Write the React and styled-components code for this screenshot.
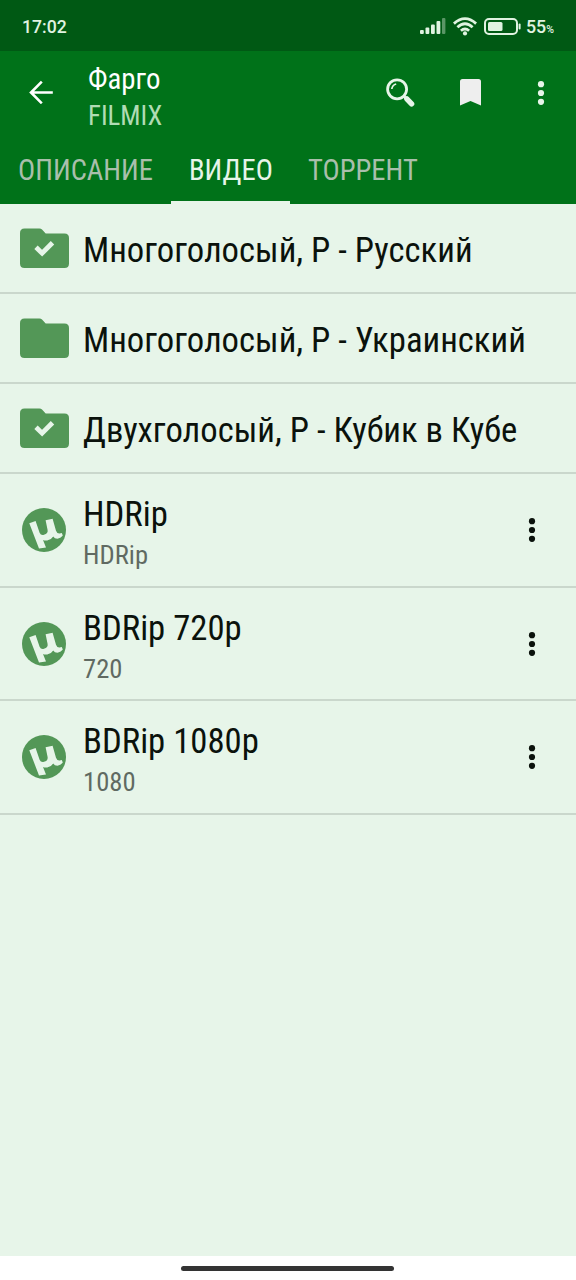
import React from "react";
import styled, { createGlobalStyle } from "styled-components";

const folders = [
  { title: "Многоголосый, P - Русский", checked: true },
  { title: "Многоголосый, P - Украинский", checked: false },
  { title: "Двухголосый, P - Кубик в Кубе", checked: true },
];

const torrents = [
  { title: "HDRip", quality: "HDRip", height: 114 },
  { title: "BDRip 720p", quality: "720", height: 113 },
  { title: "BDRip 1080p", quality: "1080", height: 114 },
];

function FolderIcon({ checked }) {
  return (
    <svg width="50" height="40" viewBox="0 0 50 40">
      <path
        d="M4.5 0.5H19.5Q21 0.5 22 1.5L25.7 5.5H44.5Q49 5.5 49 10V35.5Q49 40 44.5 40H4.5Q0 40 0 35.5V5Q0 0.5 4.5 0.5Z"
        fill="#539757"
      />
      {checked && (
        <path
          d="M16 19.3L22.1 25.2L32.5 14.7"
          fill="none"
          stroke="#e7f5e9"
          strokeWidth="4.8"
        />
      )}
    </svg>
  );
}

function TorrentIcon() {
  return (
    <svg width="44" height="44" viewBox="0 0 44 44">
      <circle cx="22" cy="22" r="22" fill="#539757" />
      <path
        d="M7.3 15.2L13.6 13L17.6 24.8Q18.8 27.6 22 26.8Q26.2 25.7 25.6 22L23.6 12.2L30.6 10.8L34 22.8Q35 25.8 37.6 25.6L39.8 25L40.8 27.4Q39 29.8 36.2 30.6Q32.8 31 31.2 28.4Q29.4 31.6 25.2 32.4Q22.6 32.8 21 32L24 39.6L17 40.4Z"
        fill="#e7f5e9"
      />
    </svg>
  );
}

function MoreIcon() {
  return (
    <svg width="8" height="24" viewBox="0 0 8 24" fill="currentColor">
      <circle cx="4" cy="3.2" r="3.1" />
      <circle cx="4" cy="12" r="3.1" />
      <circle cx="4" cy="20.8" r="3.1" />
    </svg>
  );
}

function BackIcon() {
  return (
    <svg width="24" height="24" viewBox="0 0 24 24" fill="none">
      <path
        d="M23.8 12.5H2.3M12.8 1.7L2 12.5L12.8 23.3"
        stroke="#fff"
        strokeWidth="2.6"
      />
    </svg>
  );
}

function SearchIcon() {
  return (
    <svg width="30" height="30" viewBox="0 0 30 30" fill="none" stroke="#e7f5e9">
      <circle cx="11.1" cy="11.3" r="9.5" strokeWidth="2.8" />
      <path d="M5.8 11Q6.3 7 10.2 6" strokeWidth="1.7" />
      <path d="M17.8 18L20.5 20.8" strokeWidth="2.6" />
      <path d="M20.8 20.8L25.6 25.8" strokeWidth="5.4" strokeLinecap="round" />
    </svg>
  );
}

function BookmarkIcon() {
  return (
    <svg width="21" height="27" viewBox="0 0 21 27">
      <path
        d="M2.5 0H18.5Q21 0 21 2.5V26.5L10.5 22L0 26.5V2.5Q0 0 2.5 0Z"
        fill="#eee"
      />
    </svg>
  );
}

function SignalIcon() {
  return (
    <svg width="26" height="16" viewBox="0 0 26 16" fill="#e0f3e1">
      <rect x="0" y="12" width="3.8" height="4" rx="1" />
      <rect x="5.5" y="9.5" width="3.8" height="6.5" rx="1" />
      <rect x="11" y="6.5" width="3.8" height="9.5" rx="1" />
      <rect x="16.5" y="3" width="3.8" height="13" rx="1" />
      <rect x="22" y="0" width="3.4" height="16" rx="1" opacity="0.4" />
    </svg>
  );
}

function WifiIcon() {
  return (
    <svg width="24" height="19" viewBox="0 0 24 19" fill="none" stroke="#e0f3e1">
      <path d="M0.9 6.6Q12 -3.3 23.1 6.6" strokeWidth="2.8" />
      <path d="M4.4 10.2Q12 3.4 19.6 10.2" strokeWidth="2.8" />
      <path d="M7.9 13.7Q12 10.2 16.1 13.7" strokeWidth="2.8" />
      <circle cx="12" cy="16.4" r="2.1" fill="#e0f3e1" stroke="none" />
    </svg>
  );
}

function BatteryIcon() {
  return (
    <svg width="37" height="17" viewBox="0 0 37 17">
      <rect
        x="1"
        y="1"
        width="32"
        height="15"
        rx="4"
        fill="none"
        stroke="#e0f3e1"
        strokeWidth="2"
      />
      <rect x="4" y="4" width="14.5" height="9" rx="1.5" fill="#e0f3e1" />
      <rect x="34.6" y="5.5" width="2" height="6" rx="1" fill="#e0f3e1" />
    </svg>
  );
}

export default function App() {
  return (
    <>
      <GlobalStyle />
      <Screen>
        <StatusBar>
          <Clock>17:02</Clock>
          <StatusIcons>
            <SignalIcon />
            <WifiIcon />
            <BatteryIcon />
          </StatusIcons>
          <Charge>
            55<Percent>%</Percent>
          </Charge>
        </StatusBar>
        <Header>
          <Toolbar>
            <BackButton>
              <BackIcon />
            </BackButton>
            <Heading>
              <Name>Фарго</Name>
              <Source>FILMIX</Source>
            </Heading>
            <Actions>
              <SearchIcon />
              <BookmarkIcon />
              <Overflow>
                <MoreIcon />
              </Overflow>
            </Actions>
          </Toolbar>
          <Tabs>
            <Tab $width={171}>ОПИСАНИЕ</Tab>
            <Tab $width={119} $active>
              ВИДЕО
            </Tab>
            <Tab $width={145}>ТОРРЕНТ</Tab>
          </Tabs>
        </Header>
        <List>
          {folders.map((folder) => (
            <FolderRow key={folder.title}>
              <FolderIcon checked={folder.checked} />
              <Title>{folder.title}</Title>
            </FolderRow>
          ))}
          {torrents.map((torrent) => (
            <TorrentRow key={torrent.title} $height={torrent.height}>
              <TorrentIcon />
              <Texts>
                <Title>{torrent.title}</Title>
                <Quality>{torrent.quality}</Quality>
              </Texts>
              <MoreIcon />
            </TorrentRow>
          ))}
        </List>
        <NavBar>
          <Handle />
        </NavBar>
      </Screen>
    </>
  );
}

const GlobalStyle = createGlobalStyle`
  * {
    box-sizing: border-box;
  }

  body {
    margin: 0;
    font-family: "Roboto Condensed", Roboto, sans-serif;
    font-stretch: 75%;
  }

  svg {
    display: block;
    flex-shrink: 0;
  }
`;

const Screen = styled.div`
  display: flex;
  flex-direction: column;
  width: 576px;
  height: 1280px;
  overflow: hidden;
  background-color: #e7f5e9;
`;

const StatusBar = styled.div`
  display: flex;
  align-items: center;
  height: 51px;
  padding: 2px 0 0 22px;
  font-family: Roboto, sans-serif;
  font-stretch: 100%;
  font-weight: 500;
  color: #e0f3e1;
  background-color: #005914;
`;

const Clock = styled.span`
  flex: 1;
  font-size: 17.6px;
`;

const StatusIcons = styled.div`
  display: flex;
  align-items: center;
  gap: 7px;
  padding-bottom: 1px;
`;

const Charge = styled.span`
  width: 55px;
  padding-left: 5px;
  font-size: 17.8px;
`;

const Percent = styled.span`
  font-size: 10.5px;
`;

const Header = styled.header`
  height: 153px;
  background-color: #007219;
`;

const Toolbar = styled.div`
  display: flex;
  height: 83px;
`;

const BackButton = styled.div`
  width: 88px;
  padding: 29px 0 0 29px;
`;

const Heading = styled.div`
  flex: 1;
  padding-top: 11px;
`;

const Name = styled.div`
  font-size: 28.8px;
  line-height: 34px;
  color: #fff;
`;

const Source = styled.div`
  font-size: 26.8px;
  line-height: 41px;
  color: #b0dcb4;
`;

const Actions = styled.div`
  display: flex;
  align-items: center;
  gap: 44px;
  padding-right: 31px;
  color: #e7f5e9;
`;

const Overflow = styled.div`
  padding-left: 12px;
`;

const Tabs = styled.div`
  display: flex;
  height: 70px;
`;

const Tab = styled.div`
  width: ${(props) => props.$width}px;
  padding-left: 18px;
  font-size: 28.6px;
  line-height: 72px;
  color: ${(props) => (props.$active ? "#e7f5e9" : "#a9bfab")};
  border-bottom: ${(props) => (props.$active ? "3px solid #e7f5e9" : "none")};
`;

const List = styled.div`
  flex: 1;
`;

const FolderRow = styled.div`
  display: flex;
  align-items: center;
  gap: 13px;
  height: 90px;
  padding-left: 20px;
  border-bottom: 2px solid #cad7cc;
`;

const TorrentRow = styled.div`
  display: flex;
  align-items: center;
  gap: 17px;
  height: ${(props) => props.$height}px;
  padding: 0 40px 0 22px;
  color: #0b120c;
  border-bottom: 2px solid #cad7cc;
`;

const Texts = styled.div`
  flex: 1;
  padding-top: 6px;
`;

const Title = styled.div`
  padding-top: 4px;
  font-size: 34.7px;
  line-height: 40px;
  color: #0b120c;
  white-space: nowrap;
`;

const Quality = styled.div`
  font-size: 26.6px;
  line-height: 42px;
  color: #606a62;
`;

const NavBar = styled.div`
  display: flex;
  justify-content: center;
  height: 24px;
  padding: 10px 1px 0 0;
  background-color: #fff;
`;

const Handle = styled.div`
  width: 213px;
  height: 5px;
  border-radius: 3px;
  background-color: #333;
`;
